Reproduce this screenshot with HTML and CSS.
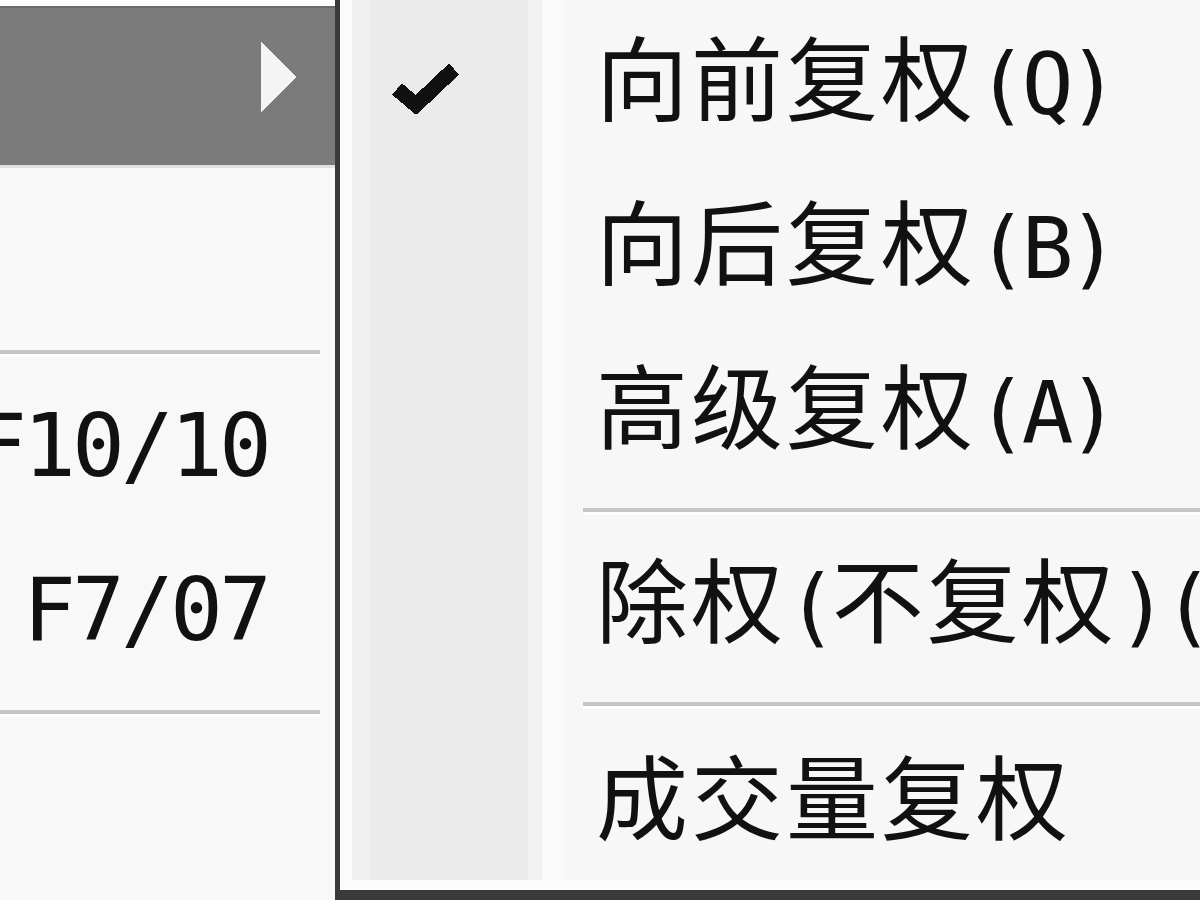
FILE: index.html
```html
<!DOCTYPE html>
<html lang="zh-CN">
  <head>
    <meta charset="UTF-8" />
    <meta name="viewport" content="width=device-width, initial-scale=1.0" />
    <title>复权</title>
    <link rel="stylesheet" href="styles.css">
  </head>
  <body>
    <!-- parent menu, "复权" entry is the hovered one -->
    <div class="parent-menu">
      <div class="top-edge"></div>
      <div class="pitem hover">
        <svg class="sub-arrow" width="38" height="70" viewBox="0 0 38 70" shape-rendering="crispEdges">
          <polygon points="0,0 36,35 0,70" />
        </svg>
      </div>
      <div class="pitem"></div>
      <div class="psep"><div class="line"></div></div>
      <div class="pitem"><span class="key">F10/10</span></div>
      <div class="pitem"><span class="key">F7/07</span></div>
      <div class="psep"><div class="line"></div></div>
      <div class="pitem"></div>
    </div>

    <!-- submenu -->
    <div class="submenu">
      <div class="menu-body">
        <div class="item">
          <span class="icon">
            <svg width="72" height="54" viewBox="0 0 72 54" shape-rendering="crispEdges">
              <polyline points="7,29 26,45 64,9" fill="none" stroke="#111" stroke-width="15" stroke-linejoin="miter" />
            </svg>
          </span>
          <span class="label">向前复权<span class="lat">(Q)</span></span>
        </div>
        <div class="item">
          <span class="icon"></span>
          <span class="label">向后复权<span class="lat">(B)</span></span>
        </div>
        <div class="item">
          <span class="icon"></span>
          <span class="label">高级复权<span class="lat">(A)</span></span>
        </div>
        <div class="sep"><div class="line"></div></div>
        <div class="item">
          <span class="icon"></span>
          <span class="label">除权<span class="lat">(</span>不复权<span class="lat">)(N)</span></span>
        </div>
        <div class="sep"><div class="line"></div></div>
        <div class="item">
          <span class="icon"></span>
          <span class="label">成交量复权</span>
        </div>
      </div>
    </div>
  </body>
</html>
```

FILE: styles.css
```css
body {
  margin: 0;
  padding: 0;
  width: 1200px;
  height: 900px;
  overflow: hidden;
  display: flex;
  background: #f8f8f8;
  color: #111;
}

/* left: parent menu */
.parent-menu {
  width: 335px;
  flex-shrink: 0;
  background: #f8f8f8;
}
.top-edge {
  height: 6px;
  background: #fcfcfc;
  border-bottom: 2px solid #6a6a6a;
}
.pitem {
  height: 164px;
  box-sizing: border-box;
  display: flex;
  align-items: center;
  justify-content: flex-end;
  padding-right: 67px;
}
.pitem.hover {
  height: 160px;
  align-items: flex-start;
  padding-top: 34px;
  padding-right: 36px;
  background: #7b7b7b;
  border-bottom: 3px solid #e2e2e2;
}
.sub-arrow polygon {
  fill: #f4f4f4;
}
.key {
  font-family: "DejaVu Sans Mono", monospace;
  font-size: 88px;
  letter-spacing: -4px;
  line-height: 1;
}
.psep {
  height: 32px;
  box-sizing: border-box;
  padding-top: 18px;
  margin-right: 15px;
}
.psep .line,
.sep .line {
  border-top: 4px solid #c6c6c6;
  border-bottom: 3px solid #ffffff;
}

/* right: submenu */
.submenu {
  flex: 1;
  min-width: 0;
  background: #fcfcfc;
  border-left: 5px solid #3a3a3a;
  border-bottom: 10px solid #3a3a3a;
  padding: 0 0 10px 12px;
  height: 900px;
  box-sizing: border-box;
  overflow: hidden;
}
.menu-body {
  height: 880px;
  background: linear-gradient(
    to right,
    #f0f0f0 0 18px,
    #ebebeb 18px 176px,
    #f2f2f2 176px 190px,
    #fafafa 190px 213px,
    #f7f7f7 213px
  );
}
.item {
  height: 164px;
  display: flex;
  align-items: center;
  white-space: nowrap;
}
.icon {
  width: 178px;
  flex-shrink: 0;
  box-sizing: border-box;
  padding-left: 38px;
  padding-top: 10px;
  display: flex;
}
.label {
  margin-left: 66px;
  padding-bottom: 10px;
  font-family: "Noto Sans CJK SC", sans-serif;
  font-size: 92px;
  letter-spacing: 3px;
  line-height: 1;
}
.lat {
  font-family: "DejaVu Sans Mono", monospace;
  font-size: 86px;
  letter-spacing: -6px;
}
.sep {
  height: 30px;
  box-sizing: border-box;
  padding-top: 16px;
  margin-left: 231px;
}
```
